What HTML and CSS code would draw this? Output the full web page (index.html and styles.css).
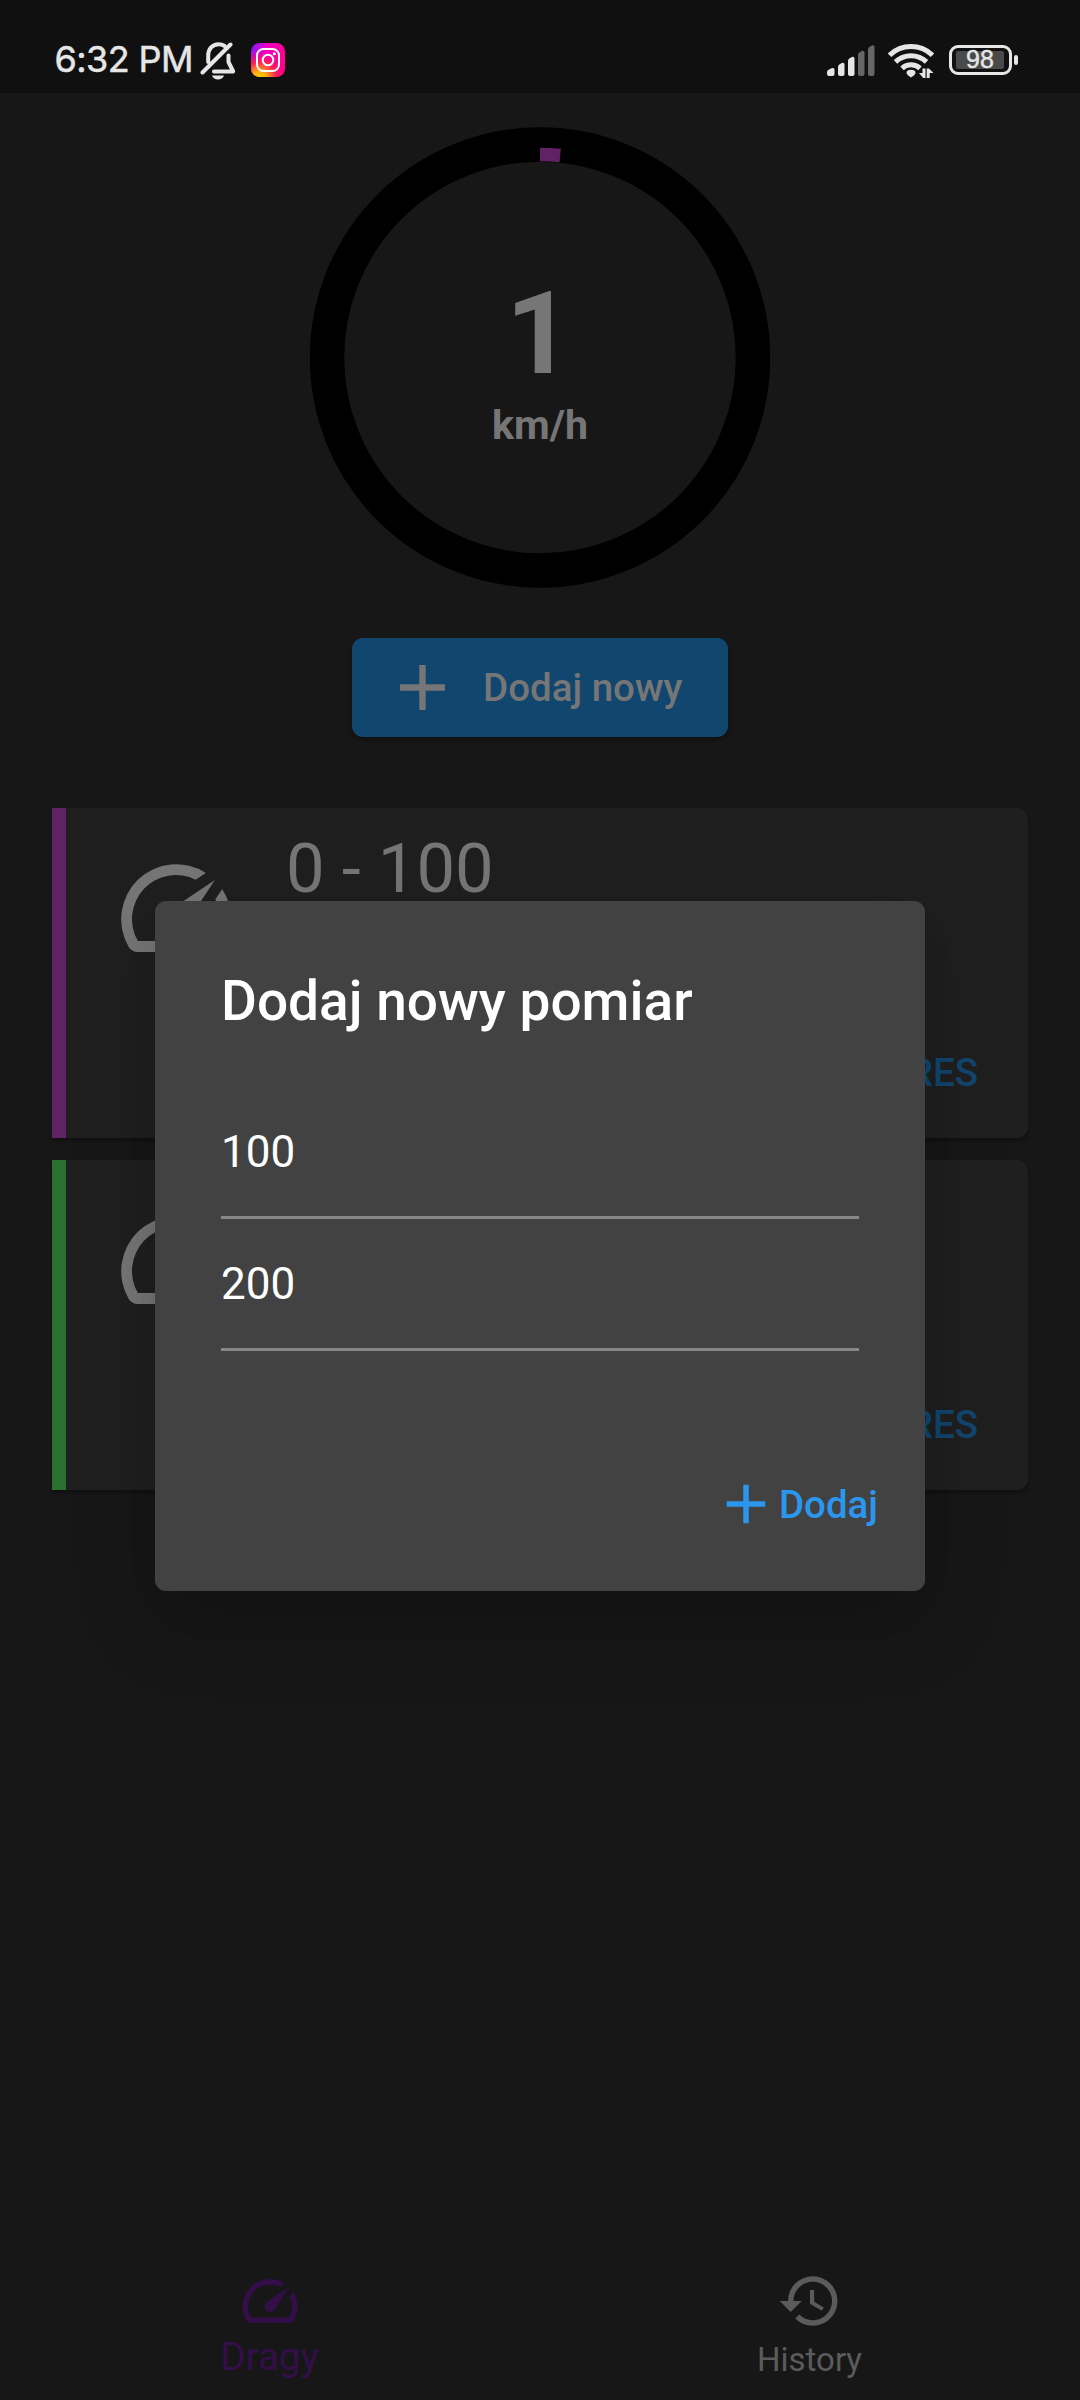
FILE: index.html
```html
<!DOCTYPE html>
<html lang="pl">
<head>
<meta charset="utf-8">
<title>Dragy</title>
<link rel="stylesheet" href="styles.css">
</head>
<body>
<svg class="defs" width="0" height="0" aria-hidden="true">
  <symbol id="speed" viewBox="0 0 24 24"><path d="M20.38 8.57l-1.23 1.85a8 8 0 0 1-.22 7.58H5.07A8 8 0 0 1 15.58 6.85l1.85-1.23A10 10 0 0 0 3.35 19a2 2 0 0 0 1.72 1h13.85a2 2 0 0 0 1.74-1 10 10 0 0 0-.27-10.44z"/><path d="M10.59 15.41a2 2 0 0 0 2.83 0l5.66-8.49-8.49 5.66a2 2 0 0 0 0 2.83z"/></symbol>
  <symbol id="add" viewBox="0 0 24 24"><path d="M19 13h-6v6h-2v-6H5v-2h6V5h2v6h6v2z"/></symbol>
</svg>
<div class="screen">
  <header class="status">
    <span class="clock">6:32 PM</span>
    <svg class="bell" width="36" height="40" viewBox="0 0 36 40">
      <g fill="none" stroke="#e6e6e6" stroke-width="4" stroke-linecap="round" stroke-linejoin="round">
        <path d="M8.200 21V14.500C8.200 8 12.500 3.200 18.500 3.200C21 3.200 23 3.900 24.600 5"/>
        <path d="M28.500 14.500V21L33.200 30.500H14"/>
        <path d="M2.500 31.500L30.500 3.500"/>
      </g>
      <path d="M12 34.500h12c-1.500 5.200-10.500 5.200-12 0z"/>
    </svg>
    <svg class="insta" width="34" height="34" viewBox="0 0 34 34">
      <defs>
        <linearGradient id="ig" x1="0" y1="0" x2="1" y2=".3"><stop offset="0" stop-color="#7a1cff"/><stop offset=".45" stop-color="#f000c8"/><stop offset="1" stop-color="#ff0090"/></linearGradient>
        <radialGradient id="ig2" cx=".25" cy="1.05" r=".85"><stop offset="0" stop-color="#ffd600"/><stop offset=".25" stop-color="#ffb010"/><stop offset=".6" stop-color="#ff2050" stop-opacity=".9"/><stop offset="1" stop-color="#ff0080" stop-opacity="0"/></radialGradient>
      </defs>
      <rect width="34" height="34" rx="8.500" fill="url(#ig)"/><rect width="34" height="34" rx="8.500" fill="url(#ig2)"/>
      <g fill="none" stroke="#fff" stroke-width="2"><rect x="6" y="6" width="22" height="22" rx="6.500"/><circle cx="17" cy="17" r="5.300"/></g>
      <circle cx="23.300" cy="10.700" r="1.500" fill="#fff"/>
    </svg>
    <span class="spacer"></span>
    <svg class="signal" width="48" height="31" viewBox="0 0 48 31">
      <g fill="#e6e6e6"><path d="M0 27.500Q0 25 2 24.500L5 23Q7.500 22.500 7.500 24.500V29Q7.500 31 5.500 31H2Q0 31 0 29z"/><path d="M11 22Q11 20 13 19L15.500 17.700Q17.500 17.500 17.500 19.500V29Q17.500 31 15.500 31H13Q11 31 11 29z"/><path d="M21 16Q21 14 23 13L25.500 11.700Q27.500 11.500 27.500 13.500V29Q27.500 31 25.500 31H23Q21 31 21 29z"/></g>
      <g fill="#666"><path d="M31 10Q31 8 33 7L35.500 5.700Q37.500 5.500 37.500 7.500V29Q37.500 31 35.500 31H33Q31 31 31 29z"/><path d="M41 4.500Q41 2.500 43 1.500L45.500.2Q47.500 0 47.500 2V29Q47.500 31 45.500 31H43Q41 31 41 29z"/></g>
    </svg>
    <svg class="wifi" width="46" height="36" viewBox="0 0 46 36">
      <g fill="none" stroke="#e6e6e6" stroke-width="5"><path d="M1.500 12.200A31 31 0 0 1 44.500 12.200"/><path d="M7.500 18.900A22.500 22.500 0 0 1 38.500 18.900"/><path d="M14 25.300A13.500 13.500 0 0 1 32 25.300"/></g>
      <path d="M18.500 30Q18.500 26.800 23 26.800T27.500 30Q27 32 23 34.500Q19 32 18.500 30z"/>
      <path d="M31 30h3.500V25.500h3V35h-2.300z M38.700 35V25.500H41L45.500 30H41.700V35z"/>
    </svg>
    <svg class="battery" width="70" height="30" viewBox="0 0 70 30">
      <rect x="1.500" y="1.500" width="60" height="27" rx="7.500" fill="none" stroke="#e6e6e6" stroke-width="3"/>
      <rect x="7" y="6" width="48" height="18" rx="2" fill="#4a4a4a"/>
      <rect x="65" y="10" width="4" height="10" rx="2"/>
      <text x="31" y="23.300" text-anchor="middle" class="charge">98</text>
    </svg>
  </header>

  <main class="content">
    <section class="gauge">
      <svg class="dial" viewBox="0 0 460 460">
        <circle cx="230" cy="230" r="213" fill="none" stroke="#000" stroke-width="34.500"/>
        <path d="M230 27A203 203 0 0 1 250.200 28" fill="none" stroke="#602262" stroke-width="13.700"/>
      </svg>
      <div class="reading"><span class="speed">1</span><span class="unit">km/h</span></div>
    </section>
    <button class="add-new"><svg width="77" height="77"><use href="#add"/></svg><span>Dodaj nowy</span></button>
    <div class="cards">
      <article class="card">
        <svg class="card-icon" width="132" height="132"><use href="#speed"/></svg>
        <h2>0 - 100</h2>
        <a class="reset">RES</a>
      </article>
      <article class="card green">
        <svg class="card-icon" width="132" height="132"><use href="#speed"/></svg>
        <a class="reset">RES</a>
      </article>
    </div>
  </main>

  <nav class="tabs">
    <a class="tab active"><svg width="66" height="66"><use href="#speed"/></svg><span>Dragy</span></a>
    <a class="tab"><svg width="66" height="66" viewBox="0 0 24 24"><path d="M13 3a9 9 0 0 0-9 9H1l3.890 3.890.07.14L9 12H6c0-3.870 3.130-7 7-7s7 3.130 7 7-3.130 7-7 7c-1.930 0-3.680-.79-4.940-2.060l-1.420 1.420A8.950 8.950 0 0 0 13 21a9 9 0 0 0 0-18zm-1 5v5l4.280 2.540.72-1.210-3.500-2.080V8H12z"/></svg><span>History</span></a>
  </nav>

  <div class="overlay">
    <section class="dialog">
      <h1>Dodaj nowy pomiar</h1>
      <div class="field">100</div>
      <div class="field">200</div>
      <div class="actions"><svg width="66" height="66"><use href="#add"/></svg><span>Dodaj</span></div>
    </section>
  </div>
</div>
</body>
</html>
```
FILE: styles.css
```css
* { box-sizing: border-box; }
body { margin: 0; background: #171717; font-family: Roboto, sans-serif; }
h1, h2 { margin: 0; }
svg { display: block; flex: none; fill: currentColor; }
.defs { position: absolute; }
.screen { position: relative; width: 1080px; height: 2400px; display: flex; flex-direction: column; overflow: hidden; }

.status { height: 93px; flex: none; background: #101010; display: flex; align-items: flex-start; padding-left: 54.500px; padding-right: 61px; color: #e6e6e6; }
.clock { width: 145.500px; margin-top: 37px; font: 400 36px/44px Inter, sans-serif; letter-spacing: -.6px; white-space: nowrap; -webkit-text-stroke: .5px #e6e6e6; }
.bell { margin-top: 41px; }
.insta { margin: 43px 0 0 15px; }
.spacer { flex: 1; }
.signal { margin-top: 45px; }
.wifi { margin: 43px 0 0 13px; }
.battery { margin: 45px 0 0 15px; }
.charge { font: 400 25px "Liberation Sans", sans-serif; stroke: #e6e6e6; stroke-width: .4px; }

.content { flex: 1; display: flex; flex-direction: column; align-items: center; padding-top: 34px; }
.gauge { width: 460px; height: 461px; display: grid; }
.dial, .reading { grid-area: 1 / 1; width: 460px; height: 461px; }
.reading { display: flex; flex-direction: column; align-items: center; color: #767676; font-weight: 700; padding-top: 139px; }
.speed { font-size: 115.500px; line-height: 135px; margin-right: 2px; }
.unit { font-size: 41.250px; line-height: 48px; }

.add-new { margin-top: 50px; width: 376px; height: 99px; border: 0; border-radius: 11px; background: #11466f; color: #767676; display: flex; align-items: center; gap: 22px; padding: 0 32px; font: 500 38.500px Roboto, sans-serif; white-space: nowrap; box-shadow: 0 4px 5px rgba(0, 0, 0, .25); }

.cards { width: 976px; margin-top: 71px; display: flex; flex-direction: column; gap: 22px; }
.card { height: 330px; display: grid; grid-template-columns: 167px 1fr; grid-template-rows: 1fr 132px; border-left: 14px solid #602262; border-radius: 0 11px 11px 0; background: #1f1f1f; color: #767676; padding-left: 44px; box-shadow: 0 3px 4px rgba(0, 0, 0, .3); }
.card.green { border-left-color: #2c7030; }
.card-icon { margin-top: 34px; grid-row: 1 / 3; }
.card h2 { grid-column: 2; margin: 20px 0 0 9px; font-size: 68.750px; font-weight: 400; line-height: 81px; }
.reset { grid-column: 2; grid-row: 2; justify-self: end; align-self: center; margin: 2px 50px 0 0; font-size: 38.500px; font-weight: 500; line-height: 46px; color: #11466f; }

.tabs { flex: none; height: 154px; display: grid; grid-template-columns: 1fr 1fr; }
.tab { display: flex; flex-direction: column; align-items: center; padding-top: 22px; color: #5b5b5b; font-size: 33px; line-height: 39px; }
.tab span { margin: 6px 1px 0 0; }
.tab.active { color: #340e49; font-size: 38.500px; line-height: 45px; }
.tab.active span { margin-top: 0; }

.overlay { position: absolute; inset: 93px 0 0; display: grid; place-items: center; padding-bottom: 1px; }
.dialog { width: 770px; height: 690px; border-radius: 11px; background: #424242; color: #fff; padding: 67px 66px 66px; display: flex; flex-direction: column; box-shadow: 0 20px 40px -10px rgba(0, 0, 0, .1), 0 30px 85px 0 rgba(0, 0, 0, .17); }
.dialog h1 { font-size: 55px; font-weight: 500; line-height: 66px; margin-bottom: 53px; white-space: nowrap; }
.field { height: 132px; flex: none; border-bottom: 3px solid #888; font-size: 44px; line-height: 52px; padding-top: 39px; }
.actions { display: flex; align-items: center; justify-content: flex-end; margin: 120px -19px 0 0; height: 66px; color: #2b96ed; font-size: 38.500px; font-weight: 500; }
```
